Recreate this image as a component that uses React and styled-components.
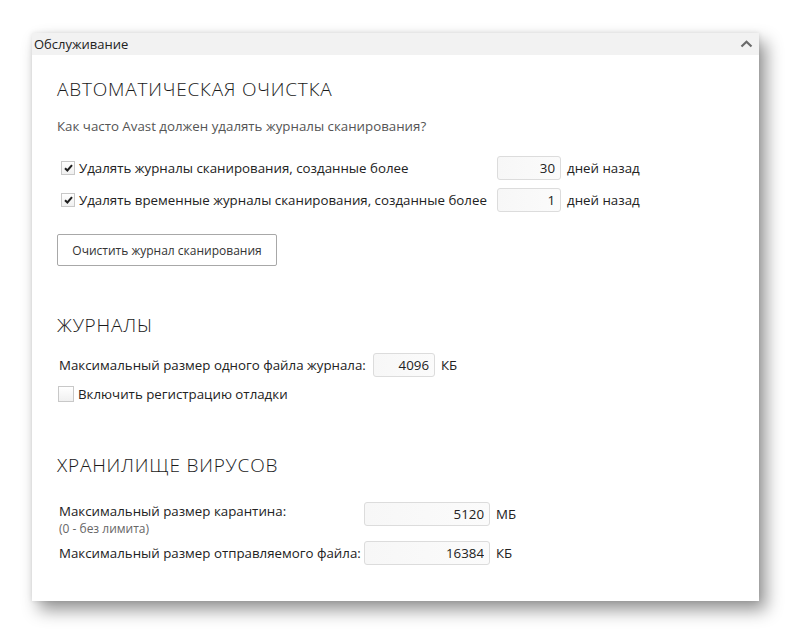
import React, { useState } from "react";
import styled, { createGlobalStyle } from "styled-components";

const GlobalStyle = createGlobalStyle`
  body {
    margin: 0;
    background: #ffffff;
    font-family: "Open Sans", "Liberation Sans", sans-serif;
    color: #222;
  }
`;

const Page = styled.div`
  padding: 33px 0 32px 32px;
`;

const Panel = styled.div`
  width: 727px;
  background: #ffffff;
  box-shadow: 7px 9px 16px rgba(0, 0, 0, 0.42), 0 0 5px rgba(0, 0, 0, 0.1);
`;

const PanelHeader = styled.div`
  height: 22px;
  background: #f2f2f2;
  display: flex;
  align-items: center;
  justify-content: space-between;
  padding: 0 6px 0 2px;
  font-size: 13px;
  color: #222;
`;

const Body = styled.div`
  padding: 22px 25px 36px 25px;
`;

const SectionTitle = styled.h2`
  margin: ${({ $top }) => $top || 0}px 0 0 0;
  font-size: 19px;
  line-height: 24px;
  font-weight: 300;
  color: #1a1a1a;
  letter-spacing: 0.8px;
`;

const Hint = styled.p`
  margin: 16px 0 0 0;
  font-size: 13.3px;
  line-height: 18px;
  color: #555;
`;

const CheckRow = styled.div`
  display: grid;
  grid-template-columns: 434px 64px auto;
  column-gap: 6px;
  align-items: center;
  margin-top: ${({ $top }) => $top}px;
`;

const CheckLabel = styled.label`
  display: flex;
  align-items: center;
  gap: ${({ $gap }) => $gap || 4}px;
  padding-left: ${({ $pad }) => $pad || 0}px;
  font-size: 13.3px;
  color: #222;
  cursor: pointer;
  white-space: nowrap;
`;

const Box = styled.span`
  width: ${({ $size }) => $size}px;
  height: ${({ $size }) => $size}px;
  box-sizing: border-box;
  border: 1px solid #c8c8c8;
  background: linear-gradient(#ffffff, #f0f0f0);
  display: flex;
  align-items: center;
  justify-content: center;
  flex-shrink: 0;
`;

const NumInput = styled.input`
  width: ${({ $w }) => $w}px;
  height: 24px;
  box-sizing: border-box;
  border: 1px solid #dcdcdc;
  border-radius: 3px;
  background: linear-gradient(90deg, #f7f7f7, #fbfbfb);
  text-align: right;
  padding: 0 5px 0 0;
  font-family: "Open Sans", "Liberation Sans", sans-serif;
  font-size: 13.3px;
  color: #222;
  outline: none;
`;

const Unit = styled.span`
  font-size: 13.3px;
  color: #222;
`;

const Button = styled.button`
  margin-top: 22px;
  width: 220px;
  height: 32px;
  border: 1px solid #a8a8a8;
  border-radius: 2px;
  background: #ffffff;
  font-family: "Open Sans", "Liberation Sans", sans-serif;
  font-size: 12px;
  color: #333;
  cursor: pointer;
`;

const FieldRow = styled.div`
  display: grid;
  grid-template-columns: ${({ $label }) => $label}px ${({ $w }) => $w}px auto;
  column-gap: 6px;
  align-items: start;
  padding-left: 2px;
  margin-top: ${({ $top }) => $top}px;
`;

const FieldLabel = styled.div`
  font-size: 13.3px;
  line-height: 18px;
  padding-top: ${({ $pt }) => ($pt === undefined ? 3 : $pt)}px;
  color: #222;
  white-space: nowrap;
`;

const Note = styled.div`
  margin-top: 1px;
  font-size: 12px;
  line-height: 16px;
  color: #666;
`;

const UnitCell = styled(Unit)`
  line-height: 24px;
`;

const Chevron = () => (
  <svg width="13" height="8" viewBox="0 0 13 8">
    <polyline
      points="1.5,6.5 6.5,1.8 11.5,6.5"
      fill="none"
      stroke="#6a6a6a"
      strokeWidth="2.2"
    />
  </svg>
);

const Check = () => (
  <svg width="9" height="8" viewBox="0 0 9 8">
    <polyline
      points="1,4.2 3.4,6.5 8,1.2"
      fill="none"
      stroke="#1f1f1f"
      strokeWidth="2"
    />
  </svg>
);

const CheckBox = ({ checked, onToggle, size, gap, pad, children }) => (
  <CheckLabel $gap={gap} $pad={pad} onClick={onToggle}>
    <Box $size={size}>{checked && <Check />}</Box>
    {children}
  </CheckLabel>
);

export default function App() {
  const [delLogs, setDelLogs] = useState(true);
  const [delTemp, setDelTemp] = useState(true);
  const [debug, setDebug] = useState(false);

  return (
    <Page>
      <GlobalStyle />
      <Panel>
        <PanelHeader>
          <span>Обслуживание</span>
          <Chevron />
        </PanelHeader>
        <Body>
          <SectionTitle>АВТОМАТИЧЕСКАЯ ОЧИСТКА</SectionTitle>
          <Hint>Как часто Avast должен удалять журналы сканирования?</Hint>

          <CheckRow $top={21}>
            <CheckBox checked={delLogs} onToggle={() => setDelLogs(!delLogs)} size={14} pad={4}>
              Удалять журналы сканирования, созданные более
            </CheckBox>
            <NumInput $w={64} defaultValue="30" />
            <Unit>дней назад</Unit>
          </CheckRow>
          <CheckRow $top={8}>
            <CheckBox checked={delTemp} onToggle={() => setDelTemp(!delTemp)} size={14} pad={4}>
              Удалять временные журналы сканирования, созданные более
            </CheckBox>
            <NumInput $w={64} defaultValue="1" />
            <Unit>дней назад</Unit>
          </CheckRow>

          <Button>Очистить журнал сканирования</Button>

          <SectionTitle $top={47}>ЖУРНАЛЫ</SectionTitle>
          <FieldRow $label={308} $w={62} $top={16}>
            <FieldLabel>Максимальный размер одного файла журнала:</FieldLabel>
            <NumInput $w={62} defaultValue="4096" />
            <UnitCell>КБ</UnitCell>
          </FieldRow>
          <CheckRow $top={8}>
            <CheckBox checked={debug} onToggle={() => setDebug(!debug)} size={16} pad={1}>
              Включить регистрацию отладки
            </CheckBox>
          </CheckRow>

          <SectionTitle $top={50}>ХРАНИЛИЩЕ ВИРУСОВ</SectionTitle>
          <FieldRow $label={299} $w={126} $top={25}>
            <FieldLabel $pt={0}>
              Максимальный размер карантина:
              <Note>(0 - без лимита)</Note>
            </FieldLabel>
            <NumInput $w={126} defaultValue="5120" />
            <UnitCell>МБ</UnitCell>
          </FieldRow>
          <FieldRow $label={299} $w={126} $top={4}>
            <FieldLabel>Максимальный размер отправляемого файла:</FieldLabel>
            <NumInput $w={126} defaultValue="16384" />
            <UnitCell>КБ</UnitCell>
          </FieldRow>
        </Body>
      </Panel>
    </Page>
  );
}
